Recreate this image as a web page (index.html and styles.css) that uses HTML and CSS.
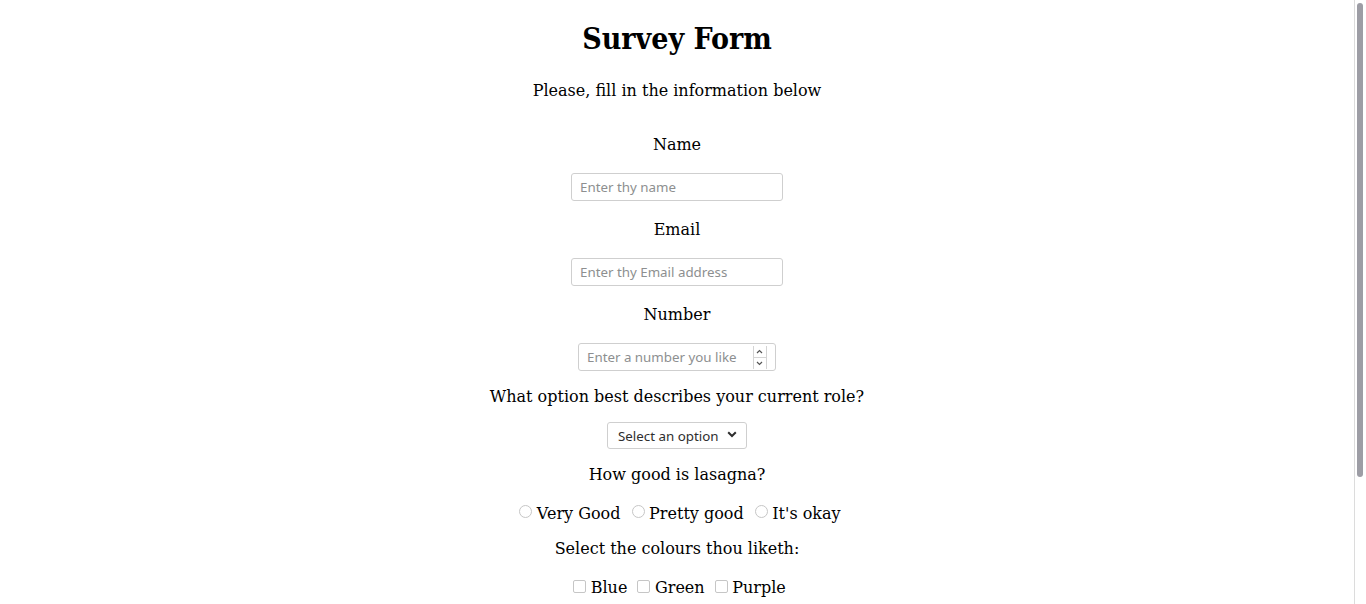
FILE: index.html
```html
<!DOCTYPE html>
<html>
<head>
<meta charset="utf-8">
<link rel="stylesheet" href="styles.css">
</head>
<body>
<main class="page">
  <h1 id="title" class="title">Survey Form</h1>
  <p id="description" class="desc">Please, fill in the information below</p>
  <form id="survey-form" class="form">
    <div class="group group--text">
      <label id="name-label" class="q" for="name">Name</label>
      <input class="field" id="name" type="text" placeholder="Enter thy name">
    </div>
    <div class="group group--text">
      <label id="email-label" class="q" for="email">Email</label>
      <input class="field" id="email" type="email" placeholder="Enter thy Email address">
    </div>
    <div class="group group--text">
      <label id="number-label" class="q" for="number">Number</label>
      <div class="numbox">
        <input class="numbox__input" id="number" type="number" placeholder="Enter a number you like">
        <span class="spin">
          <span class="spin__btn"><svg width="7" height="5" viewBox="0 0 7 5"><polyline points="1,4 3.5,1.5 6,4" fill="none" stroke="#555" stroke-width="1.2"/></svg></span>
          <span class="spin__btn spin__btn--down"><svg width="7" height="5" viewBox="0 0 7 5"><polyline points="1,1 3.5,3.5 6,1" fill="none" stroke="#555" stroke-width="1.2"/></svg></span>
        </span>
      </div>
    </div>
    <div class="group group--select">
      <label id="dropdown-label" class="q" for="dropdown">What option best describes your current role?</label>
      <div class="selectbox">
        <select class="selectbox__select" id="dropdown">
          <option>Select an option</option>
          <option>Student</option>
          <option>Full time job</option>
          <option>Prefer not to say</option>
        </select>
        <svg class="selectbox__chev" width="10" height="7" viewBox="0 0 10 7"><polyline points="1.2,1.2 5,5 8.8,1.2" fill="none" stroke="#2e2e2e" stroke-width="2"/></svg>
      </div>
    </div>
    <div class="group group--choice">
      <p class="q">How good is lasagna?</p>
      <div class="choices">
        <label class="choice"><input class="radio" type="radio" name="lasagna" value="very-good">Very Good</label>
        <label class="choice"><input class="radio" type="radio" name="lasagna" value="pretty-good">Pretty good</label>
        <label class="choice"><input class="radio" type="radio" name="lasagna" value="okay">It's okay</label>
      </div>
    </div>
    <div class="group group--choice">
      <p class="q">Select the colours thou liketh:</p>
      <div class="choices">
        <label class="choice"><input class="check" type="checkbox" value="blue">Blue</label>
        <label class="choice"><input class="check" type="checkbox" value="green">Green</label>
        <label class="choice"><input class="check" type="checkbox" value="purple">Purple</label>
      </div>
    </div>
    <div class="group group--more">
      <p class="q">Any comments?</p>
      <textarea class="area" placeholder="Enter thy comments here"></textarea>
      <button class="submit" id="submit" type="submit">Submit</button>
    </div>
  </form>
</main>
<div class="scrollbar"><div class="scrollbar__thumb"></div></div>
</body>
</html>
```

FILE: styles.css
```css
html, body {
  background: #fff;
}
body {
  margin: 0;
  padding: 0 12px 40px 0;
  font-family: "DejaVu Serif", serif;
  font-size: 16px;
  line-height: 19px;
  color: #000;
}
.page {
  display: flex;
  flex-direction: column;
  align-items: center;
  text-align: center;
}
.title {
  margin: 21px 0 0;
  font-family: "DejaVu Serif Condensed", "DejaVu Serif", serif;
  font-stretch: condensed;
  font-weight: bold;
  font-size: 30px;
  line-height: 36px;
}
.desc {
  margin: 24px 0 0;
}
.form {
  display: flex;
  flex-direction: column;
  align-items: center;
  gap: 16px;
  margin-top: 35px;
}
.group {
  display: flex;
  flex-direction: column;
  align-items: center;
  gap: 19px;
}
.group--text + .group--text {
  margin-top: 3px;
}
.group--select {
  gap: 16px;
}
.group--choice {
  gap: 20px;
}
.group--more {
  margin-top: 4px;
}
.q {
  display: block;
  margin: 0;
}
.field,
.numbox,
.selectbox {
  box-sizing: border-box;
  border: 1px solid #cfcfcf;
  border-radius: 3px;
  background: #fff;
}
.field {
  width: 212px;
  height: 28px;
  padding: 0 8px;
  font-family: "Noto Sans", "Open Sans", sans-serif;
  font-size: 13.33px;
  color: #2e3436;
  outline: none;
}
.field::placeholder,
.numbox__input::placeholder,
.area::placeholder {
  color: #8d8f90;
  opacity: 1;
}
.numbox {
  display: flex;
  align-items: center;
  width: 198px;
  height: 28px;
  padding: 0 8px 0 8px;
}
.numbox__input {
  flex: 1;
  min-width: 0;
  border: 0;
  padding: 0;
  margin: 0;
  font-family: "Noto Sans", "Open Sans", sans-serif;
  font-size: 13.33px;
  color: #2e3436;
  background: transparent;
  outline: none;
  -moz-appearance: textfield;
  appearance: textfield;
}
.numbox__input::-webkit-inner-spin-button,
.numbox__input::-webkit-outer-spin-button {
  -webkit-appearance: none;
  margin: 0;
}
.spin {
  display: flex;
  flex-direction: column;
  width: 14px;
  height: 23px;
  box-sizing: border-box;
  border-left: 1px solid #d4d4d4;
  border-right: 1px solid #d4d4d4;
}
.spin__btn {
  flex: 1;
  display: flex;
  align-items: center;
  justify-content: center;
}
.spin__btn--down {
  border-top: 1px solid #d4d4d4;
}
.selectbox {
  display: flex;
  align-items: center;
  width: 140px;
  height: 27px;
}
.selectbox__select {
  flex: 1;
  min-width: 0;
  height: 100%;
  border: 0;
  margin: 0;
  padding: 0 0 0 10px;
  background: transparent;
  font-family: "Noto Sans", "Open Sans", sans-serif;
  font-size: 13.33px;
  color: #2e2e2e;
  -webkit-appearance: none;
  appearance: none;
  outline: none;
}
.selectbox__chev {
  flex: none;
  margin: 0 9px 2px 0;
}
.choices {
  white-space: nowrap;
}
.radio,
.check {
  -webkit-appearance: none;
  appearance: none;
  box-sizing: border-box;
  display: inline-block;
  width: 13px;
  height: 13px;
  border: 1px solid #c6c6c6;
  background: #fff;
}
.radio {
  border-radius: 50%;
  margin: 0 4.5px 0 6px;
  vertical-align: 1px;
}
.check {
  border-radius: 2px;
  margin: 0 4.5px 0 5px;
  vertical-align: 0;
}
.area {
  box-sizing: border-box;
  width: 300px;
  height: 90px;
  padding: 6px 8px;
  border: 1px solid #cfcfcf;
  border-radius: 3px;
  font-family: "Noto Sans", "Open Sans", sans-serif;
  font-size: 13.33px;
  resize: vertical;
}
.submit {
  height: 30px;
  padding: 0 16px;
  border: 1px solid #cfcfcf;
  border-radius: 3px;
  background: #f6f5f4;
  font-family: "Noto Sans", "Open Sans", sans-serif;
  font-size: 13.33px;
  color: #2e2e2e;
}
.scrollbar {
  position: fixed;
  top: 0;
  right: 0;
  bottom: 0;
  width: 12px;
  box-sizing: border-box;
  border-left: 1px solid #dcdcdc;
  background: #fff;
}
.scrollbar__thumb {
  margin: 3px 0 0 2px;
  width: 6px;
  height: 474px;
  border-radius: 3px;
  background: #9d9da5;
}
```
